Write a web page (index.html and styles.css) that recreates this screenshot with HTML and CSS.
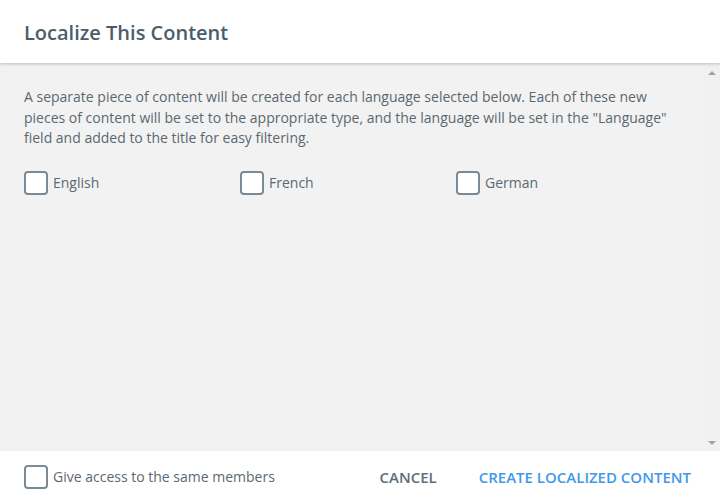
FILE: index.html
```html
<!DOCTYPE html>
<html lang="en">

<head>
    <meta charset="UTF-8" />
    <meta name="viewport" content="width=device-width, initial-scale=1" />
    <title>Localize This Content</title>
    <link rel="stylesheet" href="styles.css">
</head>

<body>

    <div class="dialog">
        <div class="dialog-header">
            <h1>Localize This Content</h1>
        </div>

        <div class="dialog-main">
            <div class="dialog-body">
                <p>A separate piece of content will be created for each language selected below. Each of these new
                    pieces of content will be set to the appropriate type, and the language will be set in the "Language"
                    field and added to the title for easy filtering.</p>

                <div class="languages">
                    <label class="check"><input type="checkbox" /> English</label>
                    <label class="check"><input type="checkbox" /> French</label>
                    <label class="check"><input type="checkbox" /> German</label>
                </div>
            </div>
            <!-- scrollbar track, drawn by hand -->
            <div class="scrollbar">
                <span class="arrow arrow-up"></span>
                <span class="arrow arrow-down"></span>
            </div>
        </div>

        <div class="dialog-footer">
            <label class="check"><input type="checkbox" /> Give access to the same members</label>
            <div class="actions">
                <button class="btn btn-cancel">Cancel</button>
                <button class="btn btn-primary">Create Localized Content</button>
            </div>
        </div>
    </div>

</body>

</html>
```

FILE: styles.css
```css
body {
    margin: 0;
    font-family: "Open Sans", Arial, sans-serif;
    color: #5b6871;
}

.dialog {
    height: 502px;
    display: flex;
    flex-direction: column;
    background: white;
}

.dialog-header {
    height: 63px;
    box-sizing: border-box;
    flex-shrink: 0;
    display: flex;
    align-items: center;
    padding: 2px 24px 0;
    background: white;
    box-shadow: 0 1px 3px rgb(0 0 0 / 0.22);
    position: relative;
    z-index: 1;
}

h1 {
    margin: 0;
    font-size: 20px;
    font-weight: 600;
    color: #4b5d6b;
}

.dialog-main {
    flex-grow: 1;
    display: flex;
    background: #f2f2f2;
}

.dialog-body {
    flex-grow: 1;
    padding: 24px 14px 24px 24px;
}

.dialog-body p {
    margin: 0;
    font-size: 14px;
    line-height: 20.5px;
}

.scrollbar {
    width: 17px;
    flex-shrink: 0;
    background: #f1f1f1;
    display: flex;
    flex-direction: column;
    justify-content: space-between;
    align-items: center;
    padding: 8px 0 6px;
}

.arrow {
    width: 0;
    height: 0;
    border-left: 4px solid transparent;
    border-right: 4px solid transparent;
}

.arrow-up {
    border-bottom: 4px solid #a3a3a3;
}

.arrow-down {
    border-top: 4px solid #a3a3a3;
}

.languages {
    display: grid;
    grid-template-columns: repeat(3, 216px);
    margin-top: 22px;
}

.check {
    display: flex;
    align-items: center;
    gap: 5px;
    font-size: 14px;
    color: #5b6871;
    user-select: none;
}

.check input {
    appearance: none;
    margin: 0;
    width: 24px;
    height: 24px;
    box-sizing: border-box;
    border: 2px solid #7b8b95;
    border-radius: 4px;
    background: white;
}

.dialog-footer {
    height: 51px;
    flex-shrink: 0;
    display: flex;
    align-items: center;
    padding: 0 29px 0 24px;
    background: white;
}

.actions {
    margin-left: auto;
    display: flex;
    gap: 42px;
}

.btn {
    border: none;
    background: none;
    padding: 0;
    font-family: inherit;
    font-size: 15px;
    font-weight: 600;
    text-transform: uppercase;
    cursor: pointer;
}

.btn-cancel {
    color: #5d6d79;
}

.btn-primary {
    color: #4299e8;
}
```
